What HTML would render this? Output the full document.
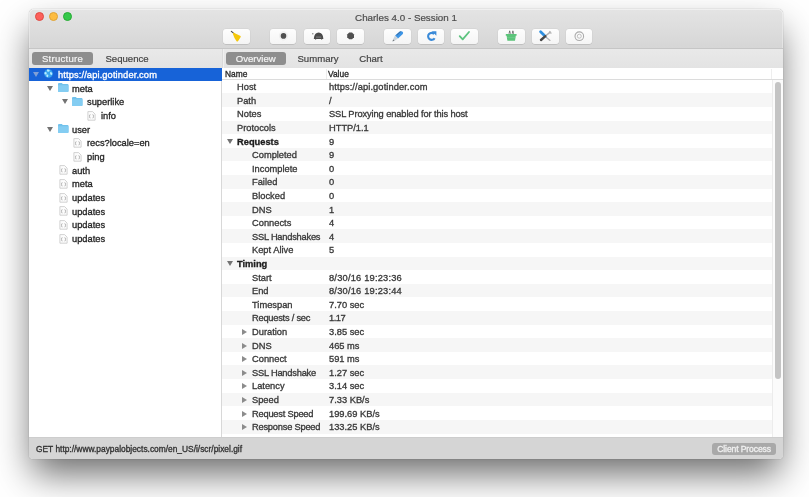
<!DOCTYPE html>
<html><head><meta charset="utf-8">
<style>
*{box-sizing:border-box;margin:0;padding:0}
html,body{width:809px;height:497px;overflow:hidden;background:#fff;font-family:"Liberation Sans",sans-serif;}
.win{position:absolute;left:29px;top:8.5px;width:754px;height:450.8px;border-radius:5px 5px 4px 4px;background:#fff;overflow:hidden;
 box-shadow:0 18px 36px -3px rgba(0,0,0,0.58),0 0 1px rgba(0,0,0,0.45);}
.titlebar{position:absolute;left:0;top:0;width:754px;height:40.5px;background:linear-gradient(#e4e4e4,#d6d6d6);border-bottom:1px solid #c6c6c6;border-radius:5px 5px 0 0;box-shadow:inset 0 1px 0 rgba(255,255,255,0.45),inset 1px 0 0 rgba(255,255,255,0.3),inset -1px 0 0 rgba(255,255,255,0.3);}
.title{position:absolute;left:0;width:754px;top:3.6px;text-align:center;font-size:9.8px;color:#4d4d4d;-webkit-text-stroke:0.2px currentColor;will-change:transform}
.tl{position:absolute;top:3.1px;width:9px;height:9px;border-radius:50%;}
.btn{position:absolute;top:20.3px;height:15px;width:26.8px;border-radius:3px;background:linear-gradient(#fdfdfd,#f5f5f5);box-shadow:0 0 0 0.5px rgba(0,0,0,0.06),0 0.5px 0.6px rgba(0,0,0,0.16);}
.tabbar{position:absolute;left:0;top:40.5px;width:754px;height:18.7px;background:linear-gradient(#e9e9e9,#e3e3e3);}
.tab{position:absolute;top:3px;height:13px;font-size:9.6px;line-height:13.4px;color:#444;text-align:center;border-radius:3px;-webkit-text-stroke:0.2px currentColor;will-change:transform}
.tab.sel{background:#8e8e8e;color:#f4f4f4;}
.left{position:absolute;left:0;top:59.2px;width:193px;height:369.3px;background:#fff;border-right:1px solid #d8d8d8;}
.right{position:absolute;left:193px;top:59.2px;width:561px;height:369.3px;background:#fff;}
.t{position:absolute;font-size:9.3px;line-height:13.65px;color:#383838;white-space:nowrap;-webkit-text-stroke:0.32px currentColor;will-change:transform}
.r{margin-top:1.4px}
.stripe{position:absolute;left:0;width:550px;height:13.65px;background:#f6f6f6;}
.status{position:absolute;left:0;top:428.5px;width:754px;height:22.5px;background:#d5d5d5;border-top:1px solid #cdcdcd;}
</style></head><body>
<div class="win">
 <div class="titlebar">
  <div class="tl" style="left:6px;background:#fc605b;border:0.5px solid #de4a43"></div>
  <div class="tl" style="left:20px;background:#fdbc40;border:0.5px solid #dea236"></div>
  <div class="tl" style="left:34px;background:#34c84a;border:0.5px solid #27aa35"></div>
  <div class="title">Charles 4.0 - Session 1</div>

  <div class="btn" style="left:194.2px"><svg width="27" height="15" viewBox="0 0 27 15" style="position:absolute;left:0;top:0"><path d="M8.4 2.4 L11 4.6" stroke="#4a4a4a" stroke-width="1.2" stroke-linecap="round"/><path d="M10.2 4 Q11 3.4 12.4 4.6 L17.6 7 Q18 7.6 17.4 8.6 L15 12.2 Q14.3 12.9 13.6 12.2 Q11 8.8 10 5.2 Q9.9 4.4 10.2 4Z" fill="#f4c70c"/></svg></div>
  <div class="btn" style="left:240.5px"><svg width="27" height="15" viewBox="0 0 27 15" style="position:absolute;left:0;top:0"><circle cx="13.5" cy="6.9" r="4.2" fill="#f4f4f4" stroke="#e6e6e6" stroke-width="0.5"/><circle cx="13.5" cy="6.9" r="2.8" fill="#505050"/></svg></div>
  <div class="btn" style="left:274.5px"><svg width="27" height="15" viewBox="0 0 27 15" style="position:absolute;left:0;top:0"><path d="M9.8 9.9 Q10.4 3.5 14.6 3.5 Q18.8 3.5 19.4 9.9Z" fill="#4a4a4a"/><path d="M12 8.1 L17.2 8.1" stroke="#a8a8a8" stroke-width="0.6"/><path d="M11 10.4 L12.2 10.4 M17 10.4 L18.2 10.4" stroke="#6a6a6a" stroke-width="0.7"/><circle cx="8.8" cy="4.7" r="0.8" fill="#8a8a8a"/></svg></div>
  <div class="btn" style="left:308.2px"><svg width="27" height="15" viewBox="0 0 27 15" style="position:absolute;left:0;top:0"><path d="M12.2 3.5 L15 3.5 L17 5.5 L17 8.3 L15 10.3 L12.2 10.3 L10.2 8.3 L10.2 5.5Z" fill="#505050"/></svg></div>
  <div class="btn" style="left:355px"><svg width="27" height="15" viewBox="0 0 27 15" style="position:absolute;left:0;top:0"><path d="M18.6 2.8 Q19.6 3.8 18.8 5 L14 9.4 L11 6.6 L15.8 2.6 Q17.2 1.6 18.6 2.8Z" fill="#3d95e6"/><path d="M15.6 2.8 Q16.6 2 17.6 2.2 L13 6.4 L12.4 5.8Z" fill="#3b6fa6"/><path d="M11 6.6 L14 9.4 L9.4 12.4 Q8.4 12.8 8.2 12.2 Z" fill="#c9d3dc"/><path d="M8.4 12.2 L9.6 10.6 L10.4 11.6Z" fill="#666"/></svg></div>
  <div class="btn" style="left:388.7px"><svg width="27" height="15" viewBox="0 0 27 15" style="position:absolute;left:0;top:0"><path d="M16.2 5 A3.5 3.5 0 1 0 16.6 9.2" stroke="#3a8ad8" stroke-width="2.1" fill="none"/><path d="M13.8 2.2 L18.4 2.2 L18.4 6.8Z" fill="#3a8ad8"/></svg></div>
  <div class="btn" style="left:422.4px"><svg width="27" height="15" viewBox="0 0 27 15" style="position:absolute;left:0;top:0"><path d="M8.7 7.2 L11.7 10.4 L18 3" stroke="#5cc37e" stroke-width="1.8" fill="none" stroke-linecap="round" stroke-linejoin="round"/></svg></div>
  <div class="btn" style="left:469.1px"><svg width="27" height="15" viewBox="0 0 27 15" style="position:absolute;left:0;top:0"><path d="M11 4.8 L11.7 1.8 L12.4 4.8 M14.2 4.8 L14.9 1.8 L15.6 4.8" stroke="#505050" stroke-width="0.7" fill="none"/><path d="M7.8 5 L18.6 5 L18.6 6.8 L17.8 6.8 L17 11.8 L9.4 11.8 L8.6 6.8 L7.8 6.8Z" fill="#5cc47a"/><path d="M9 8.6 L17.4 8.6" stroke="#7fd39a" stroke-width="0.5"/></svg></div>
  <div class="btn" style="left:503.1px"><svg width="27" height="15" viewBox="0 0 27 15" style="position:absolute;left:0;top:0"><path d="M13.2 7.4 L18 11.4" stroke="#b4b4b4" stroke-width="1.3" stroke-linecap="round"/><path d="M13.4 7 L17.6 3.6" stroke="#b0b0b0" stroke-width="1.5" stroke-linecap="round"/><path d="M17.2 2.4 Q19.4 2.8 18.8 4.8" stroke="#b0b0b0" stroke-width="1.1" fill="none"/><path d="M8.6 2.8 L12.4 6.4" stroke="#2e8fe0" stroke-width="2.8" stroke-linecap="round"/><path d="M12.4 6.4 L14.6 8.6" stroke="#5aa0e0" stroke-width="0.9"/><path d="M9 11 L13.4 7.2" stroke="#484848" stroke-width="2.4" stroke-linecap="round"/></svg></div>
  <div class="btn" style="left:536.5px"><svg width="27" height="15" viewBox="0 0 27 15" style="position:absolute;left:0;top:0"><circle cx="13.3" cy="7.2" r="4.3" fill="none" stroke="#ababab" stroke-width="1.1"/><circle cx="13.3" cy="7.2" r="2" fill="none" stroke="#b8b8b8" stroke-width="0.9"/></svg></div>
 </div>
 <div class="tabbar">
  <div class="tab sel" style="left:3px;width:61px;letter-spacing:0.25px">Structure</div>
  <div class="tab" style="left:68px;width:60px">Sequence</div>
  <div class="tab sel" style="left:197px;width:59.5px">Overview</div>
  <div class="tab" style="left:259px;width:60px">Summary</div>
  <div class="tab" style="left:322px;width:40px">Chart</div>
  <div style="position:absolute;left:192.5px;top:0;width:1px;height:18.7px;background:#dadada"></div>
  <div style="position:absolute;left:193.5px;top:0;width:1px;height:18.7px;background:#f0f0f0"></div>
 </div>
 <div class="left">
<div style="position:absolute;left:0;top:0.0px;width:193px;height:13.65px;background:#1763d8"></div>
<svg style="position:absolute;left:3.8px;top:4.5px" width="6" height="5" viewBox="0 0 6 5"><path d="M0 0 L6 0 L3 5Z" fill="#7f9fd6"/></svg>
<svg style="position:absolute;left:14.8px;top:1.8px" width="9" height="9" viewBox="0 0 9 9"><circle cx="4.5" cy="4.5" r="4.3" fill="#38a4ee"/><path d="M3 0.6 Q5.4 0.2 5.8 1.6 Q5.4 3 3.6 2.8 Q2.8 2 3 0.6Z M0.4 3.4 Q2 2.6 2.9 4 Q2.8 5.6 1 5.6 Q0.3 4.6 0.4 3.4Z M2.4 5.6 Q4.4 5 4.4 6.8 Q4 8.6 2.8 8 Q2.2 6.8 2.4 5.6Z M6.2 3 Q8.4 3.2 8.4 5 Q7.6 6.6 6.4 5.6 Q5.8 4.2 6.2 3Z" fill="#b8ecff"/></svg>
<div class="t r" style="left:28.8px;top:0.0px;color:#ffffff;letter-spacing:0.12px;">https://api.gotinder.com</div>
<svg style="position:absolute;left:18.2px;top:18.15px" width="6" height="5" viewBox="0 0 6 5"><path d="M0 0 L6 0 L3 5Z" fill="#737373"/></svg>
<svg style="position:absolute;left:29.2px;top:15.25px" width="10.5" height="9" viewBox="0 0 10.5 9"><path d="M0 1 Q0 0 1 0 L3.8 0 L4.8 1 L9.5 1 Q10.5 1 10.5 2 L10.5 8 Q10.5 9 9.5 9 L1 9 Q0 9 0 8Z" fill="#72c2ec"/><path d="M0 2.2 L10.5 2.2 L10.5 8 Q10.5 9 9.5 9 L1 9 Q0 9 0 8Z" fill="#84cdf2"/></svg>
<div class="t r" style="left:43.4px;top:13.65px;color:#262626;">meta</div>
<svg style="position:absolute;left:32.5px;top:31.8px" width="6" height="5" viewBox="0 0 6 5"><path d="M0 0 L6 0 L3 5Z" fill="#737373"/></svg>
<svg style="position:absolute;left:43.400000000000006px;top:28.900000000000002px" width="10.5" height="9" viewBox="0 0 10.5 9"><path d="M0 1 Q0 0 1 0 L3.8 0 L4.8 1 L9.5 1 Q10.5 1 10.5 2 L10.5 8 Q10.5 9 9.5 9 L1 9 Q0 9 0 8Z" fill="#72c2ec"/><path d="M0 2.2 L10.5 2.2 L10.5 8 Q10.5 9 9.5 9 L1 9 Q0 9 0 8Z" fill="#84cdf2"/></svg>
<div class="t r" style="left:57.7px;top:27.3px;color:#262626;">superlike</div>
<svg style="position:absolute;left:57.9px;top:43.050000000000004px" width="9" height="10" viewBox="0 0 9 10"><path d="M0.9 0.6 L5.6 0.6 L8.1 3.1 L8.1 9.2 L0.9 9.2Z" fill="#fcfcfc" stroke="#c6c6c6" stroke-width="0.8"/><path d="M3.4 3.6 Q2.6 3.6 2.6 4.5 L2.6 4.9 L2.1 5.3 L2.6 5.7 L2.6 6.2 Q2.6 7 3.4 7 M5.6 3.6 Q6.4 3.6 6.4 4.5 L6.4 4.9 L6.9 5.3 L6.4 5.7 L6.4 6.2 Q6.4 7 5.6 7" fill="none" stroke="#8e8e8e" stroke-width="0.65"/></svg>
<div class="t r" style="left:71.8px;top:40.95px;color:#262626;">info</div>
<svg style="position:absolute;left:18.2px;top:59.1px" width="6" height="5" viewBox="0 0 6 5"><path d="M0 0 L6 0 L3 5Z" fill="#737373"/></svg>
<svg style="position:absolute;left:29.2px;top:56.2px" width="10.5" height="9" viewBox="0 0 10.5 9"><path d="M0 1 Q0 0 1 0 L3.8 0 L4.8 1 L9.5 1 Q10.5 1 10.5 2 L10.5 8 Q10.5 9 9.5 9 L1 9 Q0 9 0 8Z" fill="#72c2ec"/><path d="M0 2.2 L10.5 2.2 L10.5 8 Q10.5 9 9.5 9 L1 9 Q0 9 0 8Z" fill="#84cdf2"/></svg>
<div class="t r" style="left:43.4px;top:54.6px;color:#262626;">user</div>
<svg style="position:absolute;left:43.6px;top:70.35px" width="9" height="10" viewBox="0 0 9 10"><path d="M0.9 0.6 L5.6 0.6 L8.1 3.1 L8.1 9.2 L0.9 9.2Z" fill="#fcfcfc" stroke="#c6c6c6" stroke-width="0.8"/><path d="M3.4 3.6 Q2.6 3.6 2.6 4.5 L2.6 4.9 L2.1 5.3 L2.6 5.7 L2.6 6.2 Q2.6 7 3.4 7 M5.6 3.6 Q6.4 3.6 6.4 4.5 L6.4 4.9 L6.9 5.3 L6.4 5.7 L6.4 6.2 Q6.4 7 5.6 7" fill="none" stroke="#8e8e8e" stroke-width="0.65"/></svg>
<div class="t r" style="left:57.7px;top:68.25px;color:#262626;">recs?locale=en</div>
<svg style="position:absolute;left:43.6px;top:84.0px" width="9" height="10" viewBox="0 0 9 10"><path d="M0.9 0.6 L5.6 0.6 L8.1 3.1 L8.1 9.2 L0.9 9.2Z" fill="#fcfcfc" stroke="#c6c6c6" stroke-width="0.8"/><path d="M3.4 3.6 Q2.6 3.6 2.6 4.5 L2.6 4.9 L2.1 5.3 L2.6 5.7 L2.6 6.2 Q2.6 7 3.4 7 M5.6 3.6 Q6.4 3.6 6.4 4.5 L6.4 4.9 L6.9 5.3 L6.4 5.7 L6.4 6.2 Q6.4 7 5.6 7" fill="none" stroke="#8e8e8e" stroke-width="0.65"/></svg>
<div class="t r" style="left:57.7px;top:81.9px;color:#262626;">ping</div>
<svg style="position:absolute;left:29.9px;top:97.64999999999999px" width="9" height="10" viewBox="0 0 9 10"><path d="M0.9 0.6 L5.6 0.6 L8.1 3.1 L8.1 9.2 L0.9 9.2Z" fill="#fcfcfc" stroke="#c6c6c6" stroke-width="0.8"/><path d="M3.4 3.6 Q2.6 3.6 2.6 4.5 L2.6 4.9 L2.1 5.3 L2.6 5.7 L2.6 6.2 Q2.6 7 3.4 7 M5.6 3.6 Q6.4 3.6 6.4 4.5 L6.4 4.9 L6.9 5.3 L6.4 5.7 L6.4 6.2 Q6.4 7 5.6 7" fill="none" stroke="#8e8e8e" stroke-width="0.65"/></svg>
<div class="t r" style="left:43.4px;top:95.55px;color:#262626;">auth</div>
<svg style="position:absolute;left:29.9px;top:111.3px" width="9" height="10" viewBox="0 0 9 10"><path d="M0.9 0.6 L5.6 0.6 L8.1 3.1 L8.1 9.2 L0.9 9.2Z" fill="#fcfcfc" stroke="#c6c6c6" stroke-width="0.8"/><path d="M3.4 3.6 Q2.6 3.6 2.6 4.5 L2.6 4.9 L2.1 5.3 L2.6 5.7 L2.6 6.2 Q2.6 7 3.4 7 M5.6 3.6 Q6.4 3.6 6.4 4.5 L6.4 4.9 L6.9 5.3 L6.4 5.7 L6.4 6.2 Q6.4 7 5.6 7" fill="none" stroke="#8e8e8e" stroke-width="0.65"/></svg>
<div class="t r" style="left:43.4px;top:109.2px;color:#262626;">meta</div>
<svg style="position:absolute;left:29.9px;top:124.95px" width="9" height="10" viewBox="0 0 9 10"><path d="M0.9 0.6 L5.6 0.6 L8.1 3.1 L8.1 9.2 L0.9 9.2Z" fill="#fcfcfc" stroke="#c6c6c6" stroke-width="0.8"/><path d="M3.4 3.6 Q2.6 3.6 2.6 4.5 L2.6 4.9 L2.1 5.3 L2.6 5.7 L2.6 6.2 Q2.6 7 3.4 7 M5.6 3.6 Q6.4 3.6 6.4 4.5 L6.4 4.9 L6.9 5.3 L6.4 5.7 L6.4 6.2 Q6.4 7 5.6 7" fill="none" stroke="#8e8e8e" stroke-width="0.65"/></svg>
<div class="t r" style="left:43.4px;top:122.85000000000001px;color:#262626;">updates</div>
<svg style="position:absolute;left:29.9px;top:138.6px" width="9" height="10" viewBox="0 0 9 10"><path d="M0.9 0.6 L5.6 0.6 L8.1 3.1 L8.1 9.2 L0.9 9.2Z" fill="#fcfcfc" stroke="#c6c6c6" stroke-width="0.8"/><path d="M3.4 3.6 Q2.6 3.6 2.6 4.5 L2.6 4.9 L2.1 5.3 L2.6 5.7 L2.6 6.2 Q2.6 7 3.4 7 M5.6 3.6 Q6.4 3.6 6.4 4.5 L6.4 4.9 L6.9 5.3 L6.4 5.7 L6.4 6.2 Q6.4 7 5.6 7" fill="none" stroke="#8e8e8e" stroke-width="0.65"/></svg>
<div class="t r" style="left:43.4px;top:136.5px;color:#262626;">updates</div>
<svg style="position:absolute;left:29.9px;top:152.25px" width="9" height="10" viewBox="0 0 9 10"><path d="M0.9 0.6 L5.6 0.6 L8.1 3.1 L8.1 9.2 L0.9 9.2Z" fill="#fcfcfc" stroke="#c6c6c6" stroke-width="0.8"/><path d="M3.4 3.6 Q2.6 3.6 2.6 4.5 L2.6 4.9 L2.1 5.3 L2.6 5.7 L2.6 6.2 Q2.6 7 3.4 7 M5.6 3.6 Q6.4 3.6 6.4 4.5 L6.4 4.9 L6.9 5.3 L6.4 5.7 L6.4 6.2 Q6.4 7 5.6 7" fill="none" stroke="#8e8e8e" stroke-width="0.65"/></svg>
<div class="t r" style="left:43.4px;top:150.15px;color:#262626;">updates</div>
<svg style="position:absolute;left:29.9px;top:165.9px" width="9" height="10" viewBox="0 0 9 10"><path d="M0.9 0.6 L5.6 0.6 L8.1 3.1 L8.1 9.2 L0.9 9.2Z" fill="#fcfcfc" stroke="#c6c6c6" stroke-width="0.8"/><path d="M3.4 3.6 Q2.6 3.6 2.6 4.5 L2.6 4.9 L2.1 5.3 L2.6 5.7 L2.6 6.2 Q2.6 7 3.4 7 M5.6 3.6 Q6.4 3.6 6.4 4.5 L6.4 4.9 L6.9 5.3 L6.4 5.7 L6.4 6.2 Q6.4 7 5.6 7" fill="none" stroke="#8e8e8e" stroke-width="0.65"/></svg>
<div class="t r" style="left:43.4px;top:163.8px;color:#262626;">updates</div>
 </div>
 <div class="right">
<div style="position:absolute;left:0;top:0;width:561px;height:12px;border-bottom:1px solid #dcdcdc;background:#fff"></div>
<div class="t" style="left:3.3px;top:0.3px;font-size:8.4px;line-height:12px;color:#2a2a2a">Name</div>
<div style="position:absolute;left:104px;top:1px;width:1px;height:10px;background:#ececec"></div>
<div class="t" style="left:106.3px;top:0.3px;font-size:8.4px;line-height:12px;color:#2a2a2a">Value</div>
<div style="position:absolute;left:549px;top:1px;width:1px;height:10px;background:#eeeeee"></div>
<div class="t r" style="left:15.3px;top:12.0px;">Host</div>
<div class="t r" style="left:106.5px;top:12.0px;letter-spacing:0.1px;">https://api.gotinder.com</div>
<div class="stripe" style="top:25.61px;height:13.61px"></div>
<div class="t r" style="left:15.3px;top:25.61px;">Path</div>
<div class="t r" style="left:106.5px;top:25.61px;">/</div>
<div class="t r" style="left:15.3px;top:39.22px;">Notes</div>
<div class="t r" style="left:106.5px;top:39.22px;letter-spacing:-0.11px;">SSL Proxying enabled for this host</div>
<div class="stripe" style="top:52.83px;height:13.61px"></div>
<div class="t r" style="left:15.3px;top:52.83px;">Protocols</div>
<div class="t r" style="left:106.5px;top:52.83px;">HTTP/1.1</div>
<svg style="position:absolute;left:4.6px;top:71.14px" width="6" height="5" viewBox="0 0 6 5"><path d="M0 0 L6 0 L3 5Z" fill="#737373"/></svg>
<div class="t r" style="left:15.3px;top:66.44px;font-weight:bold;color:#202020;">Requests</div>
<div class="t r" style="left:106.5px;top:66.44px;">9</div>
<div class="stripe" style="top:80.05px;height:13.61px"></div>
<div class="t r" style="left:29.5px;top:80.05px;">Completed</div>
<div class="t r" style="left:106.5px;top:80.05px;">9</div>
<div class="t r" style="left:29.5px;top:93.66px;">Incomplete</div>
<div class="t r" style="left:106.5px;top:93.66px;">0</div>
<div class="stripe" style="top:107.27px;height:13.61px"></div>
<div class="t r" style="left:29.5px;top:107.27px;">Failed</div>
<div class="t r" style="left:106.5px;top:107.27px;">0</div>
<div class="t r" style="left:29.5px;top:120.88px;">Blocked</div>
<div class="t r" style="left:106.5px;top:120.88px;">0</div>
<div class="stripe" style="top:134.49px;height:13.61px"></div>
<div class="t r" style="left:29.5px;top:134.49px;">DNS</div>
<div class="t r" style="left:106.5px;top:134.49px;">1</div>
<div class="t r" style="left:29.5px;top:148.1px;">Connects</div>
<div class="t r" style="left:106.5px;top:148.1px;">4</div>
<div class="stripe" style="top:161.70999999999998px;height:13.61px"></div>
<div class="t r" style="left:29.5px;top:161.70999999999998px;letter-spacing:-0.23px;">SSL Handshakes</div>
<div class="t r" style="left:106.5px;top:161.70999999999998px;">4</div>
<div class="t r" style="left:29.5px;top:175.32px;">Kept Alive</div>
<div class="t r" style="left:106.5px;top:175.32px;">5</div>
<div class="stripe" style="top:188.93px;height:13.61px"></div>
<svg style="position:absolute;left:4.6px;top:193.63px" width="6" height="5" viewBox="0 0 6 5"><path d="M0 0 L6 0 L3 5Z" fill="#737373"/></svg>
<div class="t r" style="left:15.3px;top:188.93px;font-weight:bold;color:#202020;">Timing</div>
<div class="t r" style="left:29.5px;top:202.54px;">Start</div>
<div class="t r" style="left:106.5px;top:202.54px;letter-spacing:0.2px;">8/30/16 19:23:36</div>
<div class="stripe" style="top:216.14999999999998px;height:13.61px"></div>
<div class="t r" style="left:29.5px;top:216.14999999999998px;">End</div>
<div class="t r" style="left:106.5px;top:216.14999999999998px;letter-spacing:0.2px;">8/30/16 19:23:44</div>
<div class="t r" style="left:29.5px;top:229.76px;">Timespan</div>
<div class="t r" style="left:106.5px;top:229.76px;">7.70 sec</div>
<div class="stripe" style="top:243.37px;height:13.61px"></div>
<div class="t r" style="left:29.5px;top:243.37px;letter-spacing:-0.24px;">Requests / sec</div>
<div class="t r" style="left:106.5px;top:243.37px;letter-spacing:-0.45px;">1.17</div>
<svg style="position:absolute;left:19.5px;top:261.28000000000003px" width="5" height="6" viewBox="0 0 5 6"><path d="M0 0 L5 3 L0 6Z" fill="#8c8c8c"/></svg>
<div class="t r" style="left:29.5px;top:256.98px;">Duration</div>
<div class="t r" style="left:106.5px;top:256.98px;">3.85 sec</div>
<div class="stripe" style="top:270.59px;height:13.61px"></div>
<svg style="position:absolute;left:19.5px;top:274.89px" width="5" height="6" viewBox="0 0 5 6"><path d="M0 0 L5 3 L0 6Z" fill="#8c8c8c"/></svg>
<div class="t r" style="left:29.5px;top:270.59px;">DNS</div>
<div class="t r" style="left:106.5px;top:270.59px;">465 ms</div>
<svg style="position:absolute;left:19.5px;top:288.5px" width="5" height="6" viewBox="0 0 5 6"><path d="M0 0 L5 3 L0 6Z" fill="#8c8c8c"/></svg>
<div class="t r" style="left:29.5px;top:284.2px;">Connect</div>
<div class="t r" style="left:106.5px;top:284.2px;">591 ms</div>
<div class="stripe" style="top:297.81px;height:13.61px"></div>
<svg style="position:absolute;left:19.5px;top:302.11px" width="5" height="6" viewBox="0 0 5 6"><path d="M0 0 L5 3 L0 6Z" fill="#8c8c8c"/></svg>
<div class="t r" style="left:29.5px;top:297.81px;letter-spacing:-0.22px;">SSL Handshake</div>
<div class="t r" style="left:106.5px;top:297.81px;">1.27 sec</div>
<svg style="position:absolute;left:19.5px;top:315.71999999999997px" width="5" height="6" viewBox="0 0 5 6"><path d="M0 0 L5 3 L0 6Z" fill="#8c8c8c"/></svg>
<div class="t r" style="left:29.5px;top:311.41999999999996px;">Latency</div>
<div class="t r" style="left:106.5px;top:311.41999999999996px;">3.14 sec</div>
<div class="stripe" style="top:325.03px;height:13.61px"></div>
<svg style="position:absolute;left:19.5px;top:329.33px" width="5" height="6" viewBox="0 0 5 6"><path d="M0 0 L5 3 L0 6Z" fill="#8c8c8c"/></svg>
<div class="t r" style="left:29.5px;top:325.03px;">Speed</div>
<div class="t r" style="left:106.5px;top:325.03px;">7.33 KB/s</div>
<svg style="position:absolute;left:19.5px;top:342.94px" width="5" height="6" viewBox="0 0 5 6"><path d="M0 0 L5 3 L0 6Z" fill="#8c8c8c"/></svg>
<div class="t r" style="left:29.5px;top:338.64px;letter-spacing:-0.22px;">Request Speed</div>
<div class="t r" style="left:106.5px;top:338.64px;">199.69 KB/s</div>
<div class="stripe" style="top:352.25px;height:13.61px"></div>
<svg style="position:absolute;left:19.5px;top:356.55px" width="5" height="6" viewBox="0 0 5 6"><path d="M0 0 L5 3 L0 6Z" fill="#8c8c8c"/></svg>
<div class="t r" style="left:29.5px;top:352.25px;letter-spacing:-0.22px;">Response Speed</div>
<div class="t r" style="left:106.5px;top:352.25px;">133.25 KB/s</div>
<div style="position:absolute;left:550px;top:12px;width:11px;height:357.4px;background:#fbfbfb;border-left:1px solid #ececec"></div>
<div style="position:absolute;left:553px;top:14.6px;width:6px;height:296.5px;border-radius:3px;background:#c4c4c4"></div>
 </div>
 <div class="status">
  <div class="t" style="left:6.5px;top:1px;font-size:8.4px;line-height:20px;color:#333">GET http://www.paypalobjects.com/en_US/i/scr/pixel.gif</div>
  <div style="position:absolute;left:683px;top:4.5px;width:64.2px;height:12.5px;border-radius:3px;background:#a9a9a9"></div>
  <div class="t" style="left:683px;top:4.7px;width:64.2px;text-align:center;font-size:8.6px;letter-spacing:-0.12px;line-height:12.5px;color:#f0f0f0">Client Process</div>
 </div>
</div>
</body></html>
